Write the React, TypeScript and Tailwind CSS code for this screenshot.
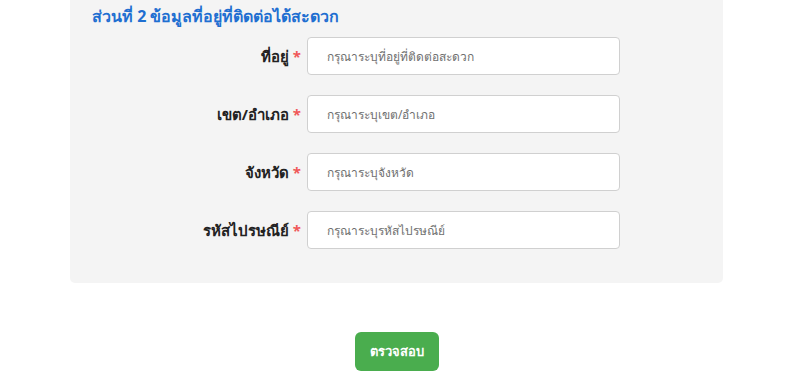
const fields = [
  { label: 'ที่อยู่', placeholder: 'กรุณาระบุที่อยู่ที่ติดต่อสะดวก' },
  { label: 'เขต/อำเภอ', placeholder: 'กรุณาระบุเขต/อำเภอ' },
  { label: 'จังหวัด', placeholder: 'กรุณาระบุจังหวัด' },
  { label: 'รหัสไปรษณีย์', placeholder: 'กรุณาระบุรหัสไปรษณีย์' },
];

export default function App() {
  return (
    <div className="min-h-[390px] bg-white font-['Tahoma','Noto_Sans','DejaVu_Sans',sans-serif]">
      <div className="ml-[70px] w-[653px] rounded-b-[5px] bg-[#f4f4f4] pb-[34px]">
        <h2 className="pl-[22px] pt-[4px] text-[16px] font-bold leading-[24px] text-[#1f6fd1]">
          ส่วนที่ 2 ข้อมูลที่อยู่ที่ติดต่อได้สะดวก
        </h2>
        <div className="mt-[9px] flex flex-col gap-[20px]">
          {fields.map(f => (
            <div key={f.label} className="flex items-center">
              <label className="w-[237px] pr-[6px] text-right text-[15px] font-bold text-[#222]">
                {f.label} <span className="text-[#f0585a]">*</span>
              </label>
              <input
                placeholder={f.placeholder}
                className="h-[38px] w-[313px] rounded-[4px] border border-[#d0d0d0] bg-white px-[19px] text-[12px] text-[#555] placeholder:text-[#6f6f6f] focus:outline-none"
              />
            </div>
          ))}
        </div>
      </div>
      <div className="ml-[70px] flex w-[653px] justify-center pt-[49px]">
        <button
          type="button"
          className="h-[39px] w-[84px] rounded-[6px] bg-[#4aad4e] text-[13px] font-bold text-white"
        >
          ตรวจสอบ
        </button>
      </div>
    </div>
  );
}
